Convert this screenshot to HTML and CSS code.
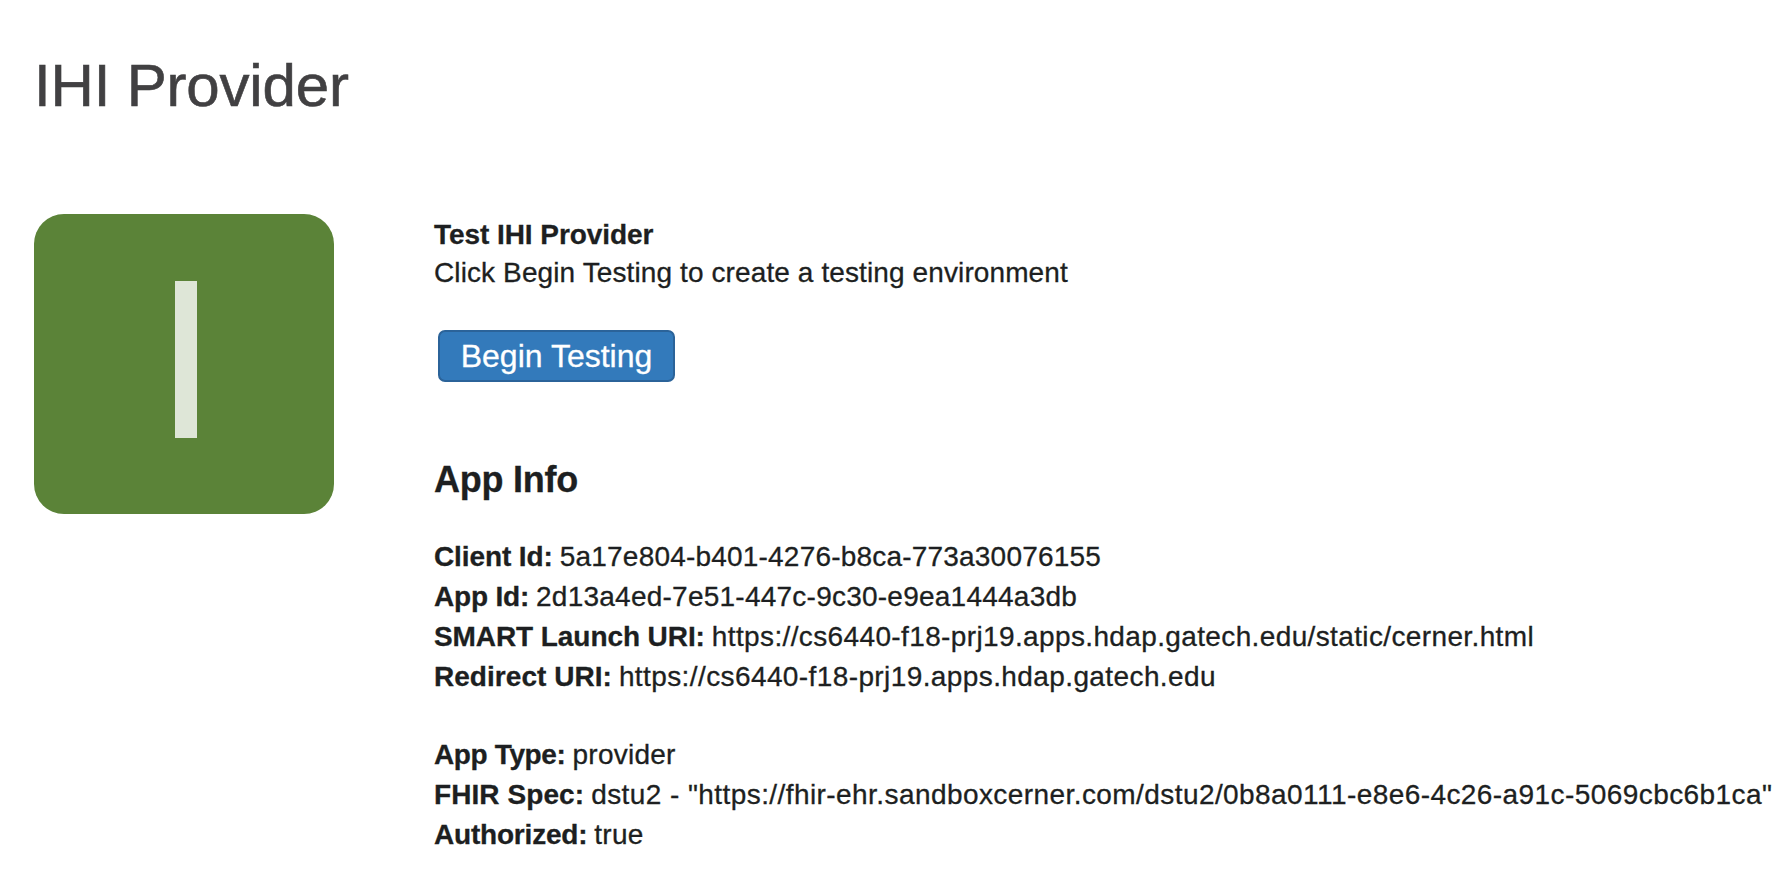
FILE: index.html
```html
<!DOCTYPE html>
<html lang="en">
<head>
<meta charset="utf-8">
<title>IHI Provider</title>
<link rel="stylesheet" href="styles.css">
</head>
<body>
<main class="page">
  <h1 class="title">IHI Provider</h1>
  <div class="content">
    <div class="tile"><svg class="mark" viewBox="0 0 22 157" aria-label="I"><rect width="22" height="157"/></svg></div>
    <div class="details">
      <section class="intro">
        <strong>Test IHI Provider</strong>
        <p>Click Begin Testing to create a testing environment</p>
        <button class="begin">Begin Testing</button>
      </section>
      <h2 class="heading">App Info</h2>
      <dl class="group">
        <div class="row client"><dt>Client Id:</dt><dd>5a17e804-b401-4276-b8ca-773a30076155</dd></div>
        <div class="row app"><dt>App Id:</dt><dd>2d13a4ed-7e51-447c-9c30-e9ea1444a3db</dd></div>
        <div class="row launch"><dt>SMART Launch URI:</dt><dd>https://cs6440-f18-prj19.apps.hdap.gatech.edu/static/cerner.html</dd></div>
        <div class="row redirect"><dt>Redirect URI:</dt><dd>https://cs6440-f18-prj19.apps.hdap.gatech.edu</dd></div>
      </dl>
      <dl class="group">
        <div class="row type"><dt>App Type:</dt><dd>provider</dd></div>
        <div class="row spec"><dt>FHIR Spec:</dt><dd>dstu2 - "https://fhir-ehr.sandboxcerner.com/dstu2/0b8a0111-e8e6-4c26-a91c-5069cbc6b1ca"</dd></div>
        <div class="row auth"><dt>Authorized:</dt><dd>true</dd></div>
      </dl>
    </div>
  </div>
</main>
</body>
</html>
```
FILE: styles.css
```css
* { box-sizing: border-box; margin: 0; padding: 0; }
body { background: #fff; color: #1d1f21; font-family: "Liberation Sans", Arial, sans-serif; font-size: 28px; -webkit-text-stroke: 0.3px currentColor; overflow: hidden; }
.page { padding: 51px 0 0 34px; }
.title { color: #414042; font-size: 60px; font-weight: 400; line-height: 70px; letter-spacing: -0.17px; white-space: nowrap; -webkit-text-stroke-width: 0.6px; }
.content { display: flex; gap: 100px; margin-top: 93px; }
.tile { flex: none; width: 300px; height: 300px; border-radius: 30px; background: #5b8338; display: flex; align-items: center; justify-content: center; padding: 0 0 9px 4px; }
.mark { width: 22px; height: 157px; fill: #dee6d7; }
.details { white-space: nowrap; }
.intro { line-height: 38px; padding-top: 2px; }
.intro strong { display: block; letter-spacing: -0.06px; }
.intro p { letter-spacing: 0.11px; }
.begin { display: block; margin: 38px 0 0 4px; padding-top: 1px; width: 237px; height: 52px; border: 2px solid #2b6399; border-radius: 7px; background: #337abb; color: #fff; font: 32px "Liberation Sans", Arial, sans-serif; -webkit-text-stroke: 0.3px currentColor; }
.heading { font-size: 36px; line-height: 44px; margin-top: 76px; letter-spacing: -0.25px; }
.group { margin-top: 35px; }
.group + .group { margin-top: 38px; }
.row { display: flex; gap: 7px; line-height: 40px; }
dt { font-weight: 700; }
.client dt { letter-spacing: -0.1px; }
.client dd { letter-spacing: 0.2px; }
.app dt { letter-spacing: -0.2px; }
.app dd { letter-spacing: 0.24px; }
.launch dt { letter-spacing: -0.08px; }
.launch dd { letter-spacing: 0.37px; }
.redirect dt { letter-spacing: 0.04px; }
.redirect dd { letter-spacing: 0.4px; }
.type dt { letter-spacing: -0.37px; }
.type dd { letter-spacing: 0.25px; }
.spec dt { letter-spacing: 0.08px; }
.spec dd { letter-spacing: 0.425px; }
.auth dt { letter-spacing: -0.2px; }
.auth dd { letter-spacing: 0.25px; }
```
